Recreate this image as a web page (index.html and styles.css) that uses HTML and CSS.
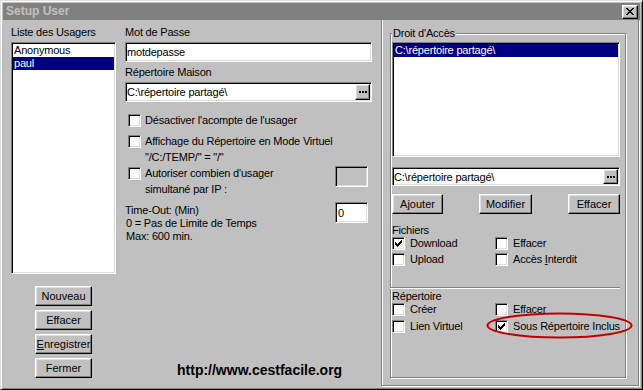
FILE: index.html
```html
<!DOCTYPE html>
<html lang="fr">
<head>
    <meta charset="UTF-8">
    <title>Setup User</title>
    <link rel="stylesheet" href="styles.css">
</head>
<body>
<div class="window">
    <div class="titlebar">
        <span class="title">Setup User</span>
        <span class="close">
            <svg width="8" height="7" viewBox="0 0 8 7"><path d="M0 0h2v1h-2zM6 0h2v1h-2zM1 1h2v1h-2zM5 1h2v1h-2zM2 2h4v1h-4zM3 3h2v1h-2zM2 4h4v1h-4zM1 5h2v1h-2zM5 5h2v1h-2zM0 6h2v1h-2zM6 6h2v1h-2z"/></svg>
        </span>
    </div>

    <div class="content">
        <!-- Liste des usagers -->
        <div class="users">
            <div class="label first">Liste des Usagers</div>
            <div class="listbox user-list">
                <div class="item">Anonymous</div>
                <div class="item selected">paul</div>
            </div>
            <div class="user-buttons">
                <button class="btn">Nouveau</button>
                <button class="btn">Effacer</button>
                <button class="btn"><u>E</u>nregistrer</button>
                <button class="btn">Fermer</button>
            </div>
        </div>

        <!-- Paramètres de l'usager -->
        <div class="settings">
            <div class="label first">Mot de Passe</div>
            <div class="field">motdepasse</div>
            <div class="label second">Répertoire Maison</div>
            <div class="field">
                <span>C:\répertoire partagé\</span>
                <span class="browse-btn"><svg width="8" height="2" viewBox="0 0 8 2"><path d="M0 0h2v2h-2zM3 0h2v2h-2zM6 0h2v2h-2z"/></svg></span>
            </div>

            <div class="opt-row opt-first">
                <span class="checkbox"></span>
                <div class="opt-text">Désactiver l'acompte de l'usager</div>
            </div>
            <div class="opt-row">
                <span class="checkbox"></span>
                <div class="opt-text">
                    <div>Affichage du Répertoire en Mode Virtuel</div>
                    <div class="line2">"/C:/TEMP/" = "/"</div>
                </div>
            </div>
            <div class="opt-row">
                <span class="checkbox"></span>
                <div class="opt-text">
                    <div>Autoriser combien d'usager</div>
                    <div class="line2">simultané par IP :</div>
                </div>
                <div class="field small disabled"></div>
            </div>

            <div class="timeout">
                <div class="timeout-text">
                    <div>Time-Out: (Min)</div>
                    <div class="indent">0 = Pas de Limite de Temps</div>
                    <div class="indent">Max: 600 min.</div>
                </div>
                <div class="field small">0</div>
            </div>

            <div class="url">http://www.cestfacile.org</div>
        </div>

        <!-- Droits d'accès -->
        <div class="access-panel">
            <fieldset class="group">
                <legend>Droit d'Accès</legend>
                <div class="listbox access-list">
                    <div class="item selected">C:\répertoire partagé\</div>
                </div>
                <div class="field dir-field">
                    <span>C:\répertoire partagé\</span>
                    <span class="browse-btn"><svg width="8" height="2" viewBox="0 0 8 2"><path d="M0 0h2v2h-2zM3 0h2v2h-2zM6 0h2v2h-2z"/></svg></span>
                </div>
                <div class="access-buttons">
                    <button class="btn" style="width: 51px">Ajouter</button>
                    <button class="btn" style="width: 53px">Modifier</button>
                    <button class="btn" style="width: 52px">Effacer</button>
                </div>

                <div class="label section">Fichiers</div>
                <div class="check-grid">
                    <div class="check">
                        <span class="checkbox"><svg width="7" height="7" viewBox="0 0 7 7"><path d="M6 0h1v1h-1zM5 1h2v1h-2zM0 2h1v1h-1zM4 2h3v1h-3zM0 3h2v1h-2zM3 3h3v1h-3zM0 4h5v1h-5zM1 5h3v1h-3zM2 6h1v1h-1z"/></svg></span>
                        <span>Download</span>
                    </div>
                    <div class="check"><span class="checkbox"></span><span>Effacer</span></div>
                    <div class="check"><span class="checkbox"></span><span>Upload</span></div>
                    <div class="check"><span class="checkbox"></span><span>Accès <u>I</u>nterdit</span></div>
                </div>

                <div class="separator"></div>

                <div class="label dir-label">Répertoire</div>
                <div class="check-grid wide">
                    <div class="check"><span class="checkbox"></span><span>Créer</span></div>
                    <div class="check"><span class="checkbox"></span><span>Effacer</span></div>
                    <div class="check"><span class="checkbox"></span><span>Lien Virtuel</span></div>
                    <div class="check marked">
                        <span class="checkbox"><svg width="7" height="7" viewBox="0 0 7 7"><path d="M6 0h1v1h-1zM5 1h2v1h-2zM0 2h1v1h-1zM4 2h3v1h-3zM0 3h2v1h-2zM3 3h3v1h-3zM0 4h5v1h-5zM1 5h3v1h-3zM2 6h1v1h-1z"/></svg></span>
                        <span>Sous Répertoire Inclus</span>
                        <svg class="circle" width="147" height="27" viewBox="0 0 147 27"><ellipse cx="73.5" cy="13.5" rx="72" ry="12" fill="none" stroke="#c00000" stroke-width="2"/></svg>
                    </div>
                </div>
            </fieldset>
        </div>
    </div>
</div>
</body>
</html>
```

FILE: styles.css
```css
body { margin: 0; font-family: "Liberation Sans", Arial, sans-serif; font-size: 11px; letter-spacing: -0.2px; color: #000; }

.window {
    width: 643px; height: 390px; box-sizing: border-box;
    display: flex; flex-direction: column;
    padding: 2px; background: #c0c0c0;
    border: 1px solid; border-color: #dfdfdf #000 #000 #dfdfdf;
    box-shadow: inset 1px 1px #fff, inset -1px -1px #808080;
}
.titlebar { height: 17px; flex: none; display: flex; padding-left: 3px; background: #808080; }
.title { font-size: 12px; font-weight: bold; line-height: 17px; letter-spacing: 0; color: #c0c0c0; }

/* raised 3d look shared by buttons */
.btn, .close, .browse-btn {
    box-sizing: border-box; background: #c0c0c0;
    border: 1px solid; border-color: #fff #000 #000 #fff;
    box-shadow: inset -1px -1px #808080, inset 1px 1px #dfdfdf;
}
.close { width: 16px; height: 14px; margin: 2px 2px 0 auto; padding: 2px 0 0 3px; }
.close svg { display: block; }
.btn { height: 20px; padding: 0; font: inherit; color: #000; }

/* sunken 3d look shared by inputs */
.field, .listbox, .checkbox {
    box-sizing: border-box; background: #fff;
    border: 1px solid; border-color: #808080 #fff #fff #808080;
    box-shadow: inset 1px 1px #000, inset -1px -1px #dfdfdf;
}

.content { flex: 1; display: flex; min-height: 0; }
.label { height: 13px; line-height: 13px; }
.label.first { margin-top: 6px; }

.users { width: 105px; margin-left: 8px; display: flex; flex-direction: column; }
.listbox { padding: 1px; }
.user-list { margin-top: 3px; height: 232px; }
.item { height: 13px; line-height: 13px; padding-left: 1px; white-space: nowrap; }
.item.selected { background: #000080; color: #fff; }
.user-buttons { margin: 12px 0 0 24px; display: flex; flex-direction: column; gap: 4px; }
.user-buttons .btn { width: 57px; }

.settings { width: 247px; margin-left: 9px; display: flex; flex-direction: column; }
.field { height: 20px; display: flex; align-items: center; padding-left: 1px; line-height: 16px; margin-top: 3px; white-space: nowrap; }
.label.second { margin-top: 4px; }
.browse-btn { width: 15px; height: 16px; margin: 0 1px 0 auto; display: flex; align-items: center; justify-content: center; }
.browse-btn svg { display: block; }

.opt-row { display: flex; align-items: flex-start; margin: 3px 0 0 3px; }
.opt-row.opt-first { margin-top: 12px; }
.opt-row + .opt-row { margin-top: 8px; }
.opt-row + .opt-row + .opt-row { margin-top: 3px; }
.checkbox { width: 13px; height: 13px; flex: none; padding: 2px; }
.checkbox svg { display: block; }
.opt-text { margin-left: 4px; line-height: 13px; }
.opt-text .line2 { margin-top: 3px; }
.field.small { width: 33px; height: 21px; margin: -1px 4px 0 auto; padding-left: 2px; }
.field.disabled { background: #c0c0c0; }

.timeout { display: flex; margin-top: 6px; }
.timeout-text { padding-top: 2px; line-height: 13px; }
.timeout-text .indent { padding-left: 1px; }
.timeout .field.small { margin-top: 0; }

.url { margin-top: auto; margin-bottom: 9px; padding-left: 52px; font-size: 14px; font-weight: bold; line-height: 16px; letter-spacing: 0; }

.access-panel {
    width: 258px; margin: 0 0 1px 9px; box-sizing: border-box;
    border: 1px solid #808080; border-top: 0;
    box-shadow: inset 1px 0 #fff, 1px 1px #fff;
}
.group {
    width: 236px; box-sizing: border-box; margin: 7px 0 0 8px; padding: 2px 5px 44px 1px;
    border: 1px solid #808080; box-shadow: inset 1px 1px #fff, 1px 1px #fff; min-width: 0;
}
.group legend { padding: 0 1px; line-height: 13px; background: #c0c0c0; }
.access-list { height: 115px; }
.dir-field { margin-top: 10px; height: 19px; }
.dir-field .browse-btn { height: 15px; }
.access-buttons { display: flex; justify-content: space-between; margin-top: 8px; }

.label.section { margin-top: 10px; }
.check-grid { display: grid; grid-template-columns: 103px 1fr; row-gap: 3px; }
.check-grid.wide { row-gap: 4px; }
.check { display: flex; align-items: center; gap: 5px; height: 13px; line-height: 13px; white-space: nowrap; }
.separator { margin: 21px 0 0 -2px; width: 230px; border-top: 1px solid #808080; border-bottom: 1px solid #fff; }
.label.dir-label { margin-top: 1px; }

.marked { position: relative; }
.circle { position: absolute; left: -9px; top: -8px; }
```
